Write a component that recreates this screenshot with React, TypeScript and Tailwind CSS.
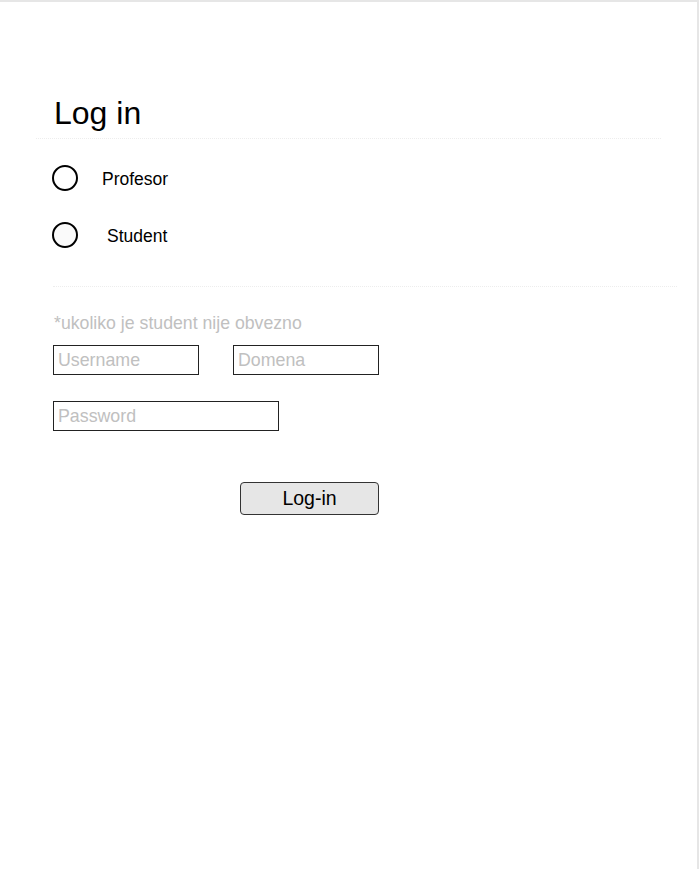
const font = { fontFamily: '"Liberation Sans", Arial, sans-serif' };

function Radio({ label, gap, filled }: { label: string; gap: string; filled?: boolean }) {
	return (
		<div className="ml-[52px] flex h-[26px] items-center">
			<span
				className={`h-[26px] w-[26px] shrink-0 rounded-full border-2 border-black ${filled ? "bg-[#fafafa]" : "bg-white"}`}
			/>
			<span className={`${gap} mt-[3px] text-[17.5px] leading-none text-black`}>{label}</span>
		</div>
	);
}

function Field({ placeholder, width }: { placeholder: string; width: string }) {
	return (
		<input
			type="text"
			placeholder={placeholder}
			className={`${width} h-[30px] border border-[#222] bg-white px-[4px] text-[17.8px] text-black outline-none placeholder:text-[#c0c0c0]`}
		/>
	);
}

export default function App() {
	return (
		<div
			className="h-[869px] w-[699px] border-t-2 border-r-2 border-[#e6e6e6] bg-white"
			style={font}
		>
			<h1 className="mt-[93px] ml-[54px] h-[37px] text-[32px] leading-[37px] text-black">Log in</h1>
			<div className="mt-[6px] ml-[36px] w-[625px] border-t border-dotted border-[#ededed]" />

			<div className="mt-[26px]">
				<Radio label="Profesor" gap="ml-[24px]" />
			</div>
			<div className="mt-[31px]">
				<Radio label="Student" gap="ml-[29px]" filled />
			</div>

			<div className="mt-[38px] ml-[53px] w-[624px] border-t border-dotted border-[#ededed]" />

			<p className="mt-[26px] ml-[54px] h-[20px] text-[17.7px] leading-[20px] text-[#c0c0c0]">
				*ukoliko je student nije obvezno
			</p>

			<div className="mt-[12px] ml-[53px] flex gap-[34px]">
				<Field placeholder="Username" width="w-[146px]" />
				<Field placeholder="Domena" width="w-[146px]" />
			</div>

			<div className="mt-[26px] ml-[53px] flex">
				<Field placeholder="Password" width="w-[226px]" />
			</div>

			<div className="mt-[51px] ml-[240px]">
				<button
					type="button"
					className="h-[33px] w-[139px] rounded-[4px] border border-[#333] bg-[#e6e6e6] text-[19.5px] leading-none text-black"
				>
					Log-in
				</button>
			</div>
		</div>
	);
}
